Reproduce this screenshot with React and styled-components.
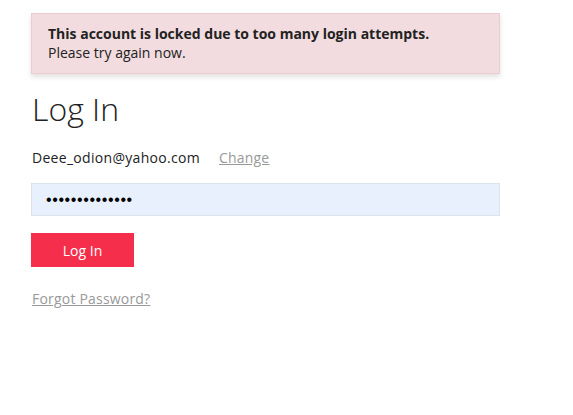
import React from "react";
import styled, { createGlobalStyle } from "styled-components";

const Global = createGlobalStyle`
  html, body { margin: 0; padding: 0; background: #fff; }
  body { font-family: "Open Sans", "Noto Sans", sans-serif; color: #222; }
`;

const Page = styled.div`
  width: 469px;
  padding: 13px 0 0 31px;
  display: flex;
  flex-direction: column;
`;

const Alert = styled.div`
  background: #f2dcdf;
  border: 1px solid #ebcdd1;
  box-shadow: 0 3px 5px rgba(0, 0, 0, 0.12);
  padding: 10px 16px 11px;
  font-size: 14px;
  line-height: 19px;
  color: #222;
`;

const AlertTitle = styled.div`
  font-weight: 700;
`;

const Heading = styled.h1`
  margin: 13px 0 0 1px;
  font-size: 32px;
  font-weight: 300;
  line-height: 44px;
  color: #222;
`;

const EmailRow = styled.div`
  display: flex;
  gap: 19px;
  margin-top: 17px;
  padding-left: 1px;
  font-size: 14px;
  line-height: 20px;
`;

const Email = styled.span`
  letter-spacing: 0.3px;
`;

const Link = styled.a`
  color: #999;
  text-decoration: underline;
  font-size: 14px;
  letter-spacing: 0.2px;
  cursor: pointer;
`;

const Input = styled.input`
  margin-top: 15px;
  height: 33px;
  box-sizing: border-box;
  width: 100%;
  background: #e8f0fe;
  border: 1px solid #dde3ec;
  padding: 0 14px;
  font-size: 16px;
  font-family: "Liberation Sans", sans-serif;
  letter-spacing: 0.6px;
  color: #000;
  outline: none;
`;

const Button = styled.button`
  margin-top: 17px;
  width: 103px;
  height: 34px;
  background: #f52e4b;
  color: #fff;
  border: none;
  font-family: "Open Sans", sans-serif;
  font-size: 14px;
  cursor: pointer;
`;

const Forgot = styled(Link)`
  margin-top: 22px;
  margin-left: 1px;
  align-self: flex-start;
  line-height: 20px;
`;

export default function App() {
  return (
    <>
      <Global />
      <Page>
        <Alert>
          <AlertTitle>This account is locked due to too many login attempts.</AlertTitle>
          <div>Please try again now.</div>
        </Alert>
        <Heading>Log In</Heading>
        <EmailRow>
          <Email>Deee_odion@yahoo.com</Email>
          <Link>Change</Link>
        </EmailRow>
        <Input type="password" defaultValue="aaaaaaaaaaaaaa" readOnly />
        <Button>Log In</Button>
        <Forgot>Forgot Password?</Forgot>
      </Page>
    </>
  );
}
